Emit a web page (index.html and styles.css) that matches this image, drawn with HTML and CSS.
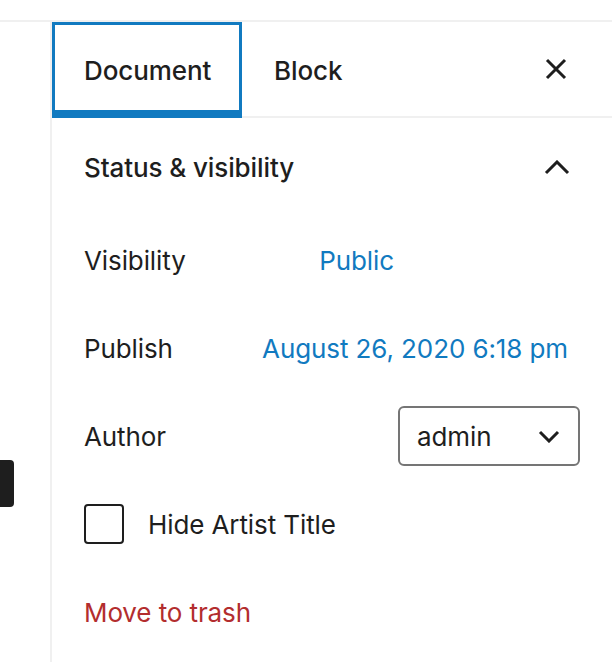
FILE: index.html
```html
<!DOCTYPE html>
<html>
<head>
<meta charset="utf-8">
<link rel="stylesheet" href="styles.css">
</head>
<body>
<div class="topbar"></div>
<div class="main">
  <div class="canvas">
    <div class="dark-tab"></div>
  </div>
  <aside class="sidebar">
    <div class="sidebar-header">
      <div class="tab active">Document</div>
      <div class="tab">Block</div>
      <div class="close">
        <svg width="22" height="22" viewBox="0 0 22 22"><path d="M2 2L20 20M20 2L2 20" stroke="#1e1e1e" stroke-width="3" fill="none"/></svg>
      </div>
    </div>
    <div class="panel">
      <div class="panel-title">
        <span>Status &amp; visibility</span>
        <svg width="26" height="15" viewBox="0 0 26 15"><path d="M2 13L13 2L24 13" stroke="#1e1e1e" stroke-width="3" fill="none"/></svg>
      </div>
      <div class="row">
        <span class="label">Visibility</span>
        <span class="link">Public</span>
      </div>
      <div class="row">
        <span class="label">Publish</span>
        <span class="link">August 26, 2020 6:18 pm</span>
      </div>
      <div class="row">
        <span class="label">Author</span>
        <div class="select">
          <span>admin</span>
          <svg width="22" height="13" viewBox="0 0 22 13"><path d="M2 2L11 11L20 2" stroke="#1e1e1e" stroke-width="3" fill="none"/></svg>
        </div>
      </div>
      <div class="row">
        <span class="checkbox"></span>
        <span class="check-label">Hide Artist Title</span>
      </div>
      <div class="row">
        <span class="trash">Move to trash</span>
      </div>
    </div>
  </aside>
</div>
</body>
</html>
```
FILE: styles.css
```css
html, body {
  margin: 0;
  padding: 0;
  background: #fff;
  overflow: hidden;
}
body {
  font-family: Inter, "Noto Sans", sans-serif;
  color: #1e1e1e;
  width: 612px;
  height: 662px;
  letter-spacing: -0.1px;
}
.topbar {
  height: 20px;
  border-bottom: 2px solid #f0f0f0;
}
.main {
  display: flex;
  height: 640px;
}
.canvas {
  width: 50px;
  padding-top: 438px;
}
.dark-tab {
  width: 14px;
  height: 47px;
  background: #1e1e1e;
  border-radius: 0 4px 4px 0;
}
.sidebar {
  flex: 1;
  border-left: 2px solid #f0f0f0;
}
.sidebar-header {
  display: flex;
  height: 94px;
  border-bottom: 2px solid #f0f0f0;
}
.tab {
  box-sizing: border-box;
  height: 96px;
  padding: 0 32px;
  display: flex;
  align-items: center;
  font-size: 26px;
  font-weight: 500;
  border: 3px solid transparent;
  border-bottom-width: 8px;
  padding-top: 6px;
}
.tab.active {
  border-color: #117ac0;
  width: 190px;
  padding-left: 29px;
}
.tab + .tab {
  padding-left: 29px;
}
.close {
  margin-left: auto;
  margin-right: 45px;
  display: flex;
  align-items: center;
}
.panel {
  padding: 0 32px;
}
.panel-title {
  height: 98px;
  display: flex;
  align-items: center;
  justify-content: space-between;
  font-size: 26px;
  font-weight: 500;
  padding-right: 10px;
}
.row {
  height: 88px;
  display: flex;
  align-items: center;
  font-size: 26px;
}
.label {
  width: 45%;
  flex: none;
}
.link {
  color: #117ac0;
  padding: 0 12px;
}
.row:nth-child(3) {
  justify-content: space-between;
}
.row:nth-child(3) .label {
  width: auto;
}
.row:nth-child(4) {
  justify-content: space-between;
}
.row:nth-child(4) .label {
  width: auto;
}
.select {
  box-sizing: border-box;
  width: 182px;
  height: 60px;
  border: 2px solid #757575;
  border-radius: 6px;
  display: flex;
  align-items: center;
  justify-content: space-between;
  padding: 0 18px 0 17px;
}
.checkbox {
  box-sizing: border-box;
  width: 40px;
  height: 40px;
  border: 2.5px solid #1e1e1e;
  border-radius: 4px;
  flex: none;
}
.check-label {
  margin-left: 24px;
}
.trash {
  color: #b32d2e;
}
```
